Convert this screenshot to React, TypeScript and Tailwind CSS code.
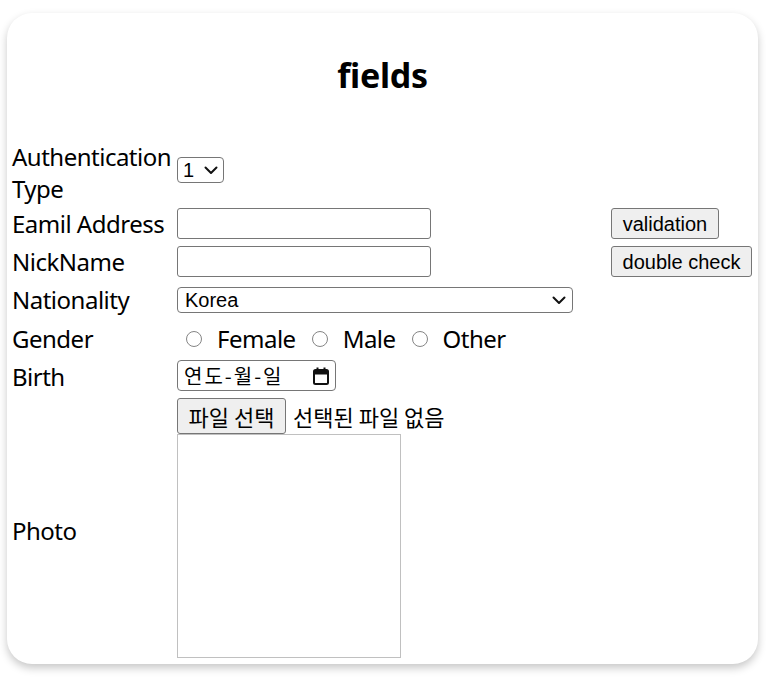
import React from "react";

const LABEL = "font-['Noto_Sans','Noto_Sans_CJK_KR',sans-serif] text-[24px] leading-[32px] tracking-[-0.5px] text-black";
const CTRL = "font-['Liberation_Sans',Arial,sans-serif] text-[20px] text-black";
const KR = "font-['Noto_Sans_CJK_KR','Noto_Sans',sans-serif]";

function Chevron() {
  return (
    <svg width="14" height="9" viewBox="0 0 14 9" className="shrink-0">
      <polyline points="1.5,1.5 7,7 12.5,1.5" fill="none" stroke="#111" strokeWidth="2" strokeLinecap="round" strokeLinejoin="round" />
    </svg>
  );
}

function Calendar() {
  return (
    <svg width="16" height="18" viewBox="0 0 16 18" className="shrink-0">
      <rect x="1" y="3" width="14" height="14" rx="1.5" fill="none" stroke="#111" strokeWidth="2" />
      <rect x="1" y="3" width="14" height="4.5" fill="#111" />
      <rect x="3.5" y="0.5" width="2" height="3" fill="#111" />
      <rect x="10.5" y="0.5" width="2" height="3" fill="#111" />
    </svg>
  );
}

function Radio({ label, last }: { label: string; last?: boolean }) {
  return (
    <div className={`flex items-center ${last ? "" : "mr-[7px]"}`}>
      <span className="w-[16px] h-[16px] rounded-full border-[1.5px] border-[#858585] bg-white ml-[9px] mr-[15px]" />
      <span className={LABEL}>{label}</span>
    </div>
  );
}

function Btn({ children, w }: { children: React.ReactNode; w: string }) {
  return (
    <div className={`${w} h-[31px] flex items-center justify-center bg-[#efefef] border border-[#767676] rounded-[3px] ${CTRL}`}>
      {children}
    </div>
  );
}

export default function App() {
  return (
    <div className="min-h-[683px] bg-white pt-[13px] pl-[7px]">
      <div className="w-[751px] h-[651px] bg-white rounded-[25px] shadow-[0_4px_9px_rgba(0,0,0,0.22)] flex flex-col">
        <h2 className="mt-[38px] h-[48px] leading-[48px] text-center font-['Noto_Sans',sans-serif] font-bold text-[34px] tracking-[-0.3px] text-black">
          fields
        </h2>
        <div className="mt-[42px] pl-[5px] grid grid-cols-[165px_434px_auto]">
          {/* Auth type */}
          <div className={`h-[64px] ${LABEL}`}>
            Authentication
            <br />
            Type
          </div>
          <div className="h-[64px] flex items-center">
            <div className={`w-[47px] h-[26px] -mt-[6px] flex items-center justify-between pl-[5px] pr-[5px] border border-[#767676] rounded-[4px] ${CTRL}`}>
              <span>1</span>
              <Chevron />
            </div>
          </div>
          <div />

          {/* Email */}
          <div className={`h-[38px] flex items-center ${LABEL}`}>Eamil Address</div>
          <div className="h-[38px] flex items-center">
            <div className="w-[254px] h-[31px] -mt-[1px] border border-[#767676] rounded-[3px] bg-white" />
          </div>
          <div className="h-[38px] flex items-center">
            <div className="-mt-[1px]">
              <Btn w="w-[108px]">validation</Btn>
            </div>
          </div>

          {/* NickName */}
          <div className={`h-[38px] flex items-center ${LABEL}`}>NickName</div>
          <div className="h-[38px] flex items-center">
            <div className="w-[254px] h-[31px] -mt-[1px] border border-[#767676] rounded-[3px] bg-white" />
          </div>
          <div className="h-[38px] flex items-center">
            <div className="-mt-[1px]">
              <Btn w="w-[141px]">double check</Btn>
            </div>
          </div>

          {/* Nationality */}
          <div className={`h-[38px] flex items-center ${LABEL}`}>Nationality</div>
          <div className="h-[38px] flex items-center">
            <div className={`w-[396px] h-[26px] flex items-center justify-between pl-[7px] pr-[6px] border border-[#767676] rounded-[4px] ${CTRL}`}>
              <span>Korea</span>
              <Chevron />
            </div>
          </div>
          <div />

          {/* Gender */}
          <div className={`h-[40px] flex items-center ${LABEL}`}>Gender</div>
          <div className="h-[40px] flex items-center">
            <Radio label="Female" />
            <Radio label="Male" />
            <Radio label="Other" last />
          </div>
          <div />

          {/* Birth */}
          <div className={`h-[36px] flex items-center ${LABEL}`}>Birth</div>
          <div className="h-[36px] flex items-center">
            <div className="w-[159px] h-[31px] -mt-[3px] flex items-center justify-between pl-[6px] pr-[6px] border border-[#767676] rounded-[4px]">
              <span className={`${KR} text-[20px] tracking-[2px] text-black`}>연도-월-일</span>
              <Calendar />
            </div>
          </div>
          <div />

          {/* Photo */}
          <div className={`h-[266px] pt-[6px] flex items-center ${LABEL}`}>Photo</div>
          <div className="h-[266px] flex flex-col pt-[3px]">
            <div className="flex items-center">
              <div className={`w-[109px] h-[36px] flex items-center justify-center bg-[#efefef] border border-[#767676] rounded-[3px] ${KR} text-[22px] text-black`}>
                파일 선택
              </div>
              <span className={`ml-[7px] ${KR} text-[22px] text-black`}>선택된 파일 없음</span>
            </div>
            <div className="w-[224px] h-[224px] border border-[#c0c0c0]" />
          </div>
          <div />
        </div>
      </div>
    </div>
  );
}
